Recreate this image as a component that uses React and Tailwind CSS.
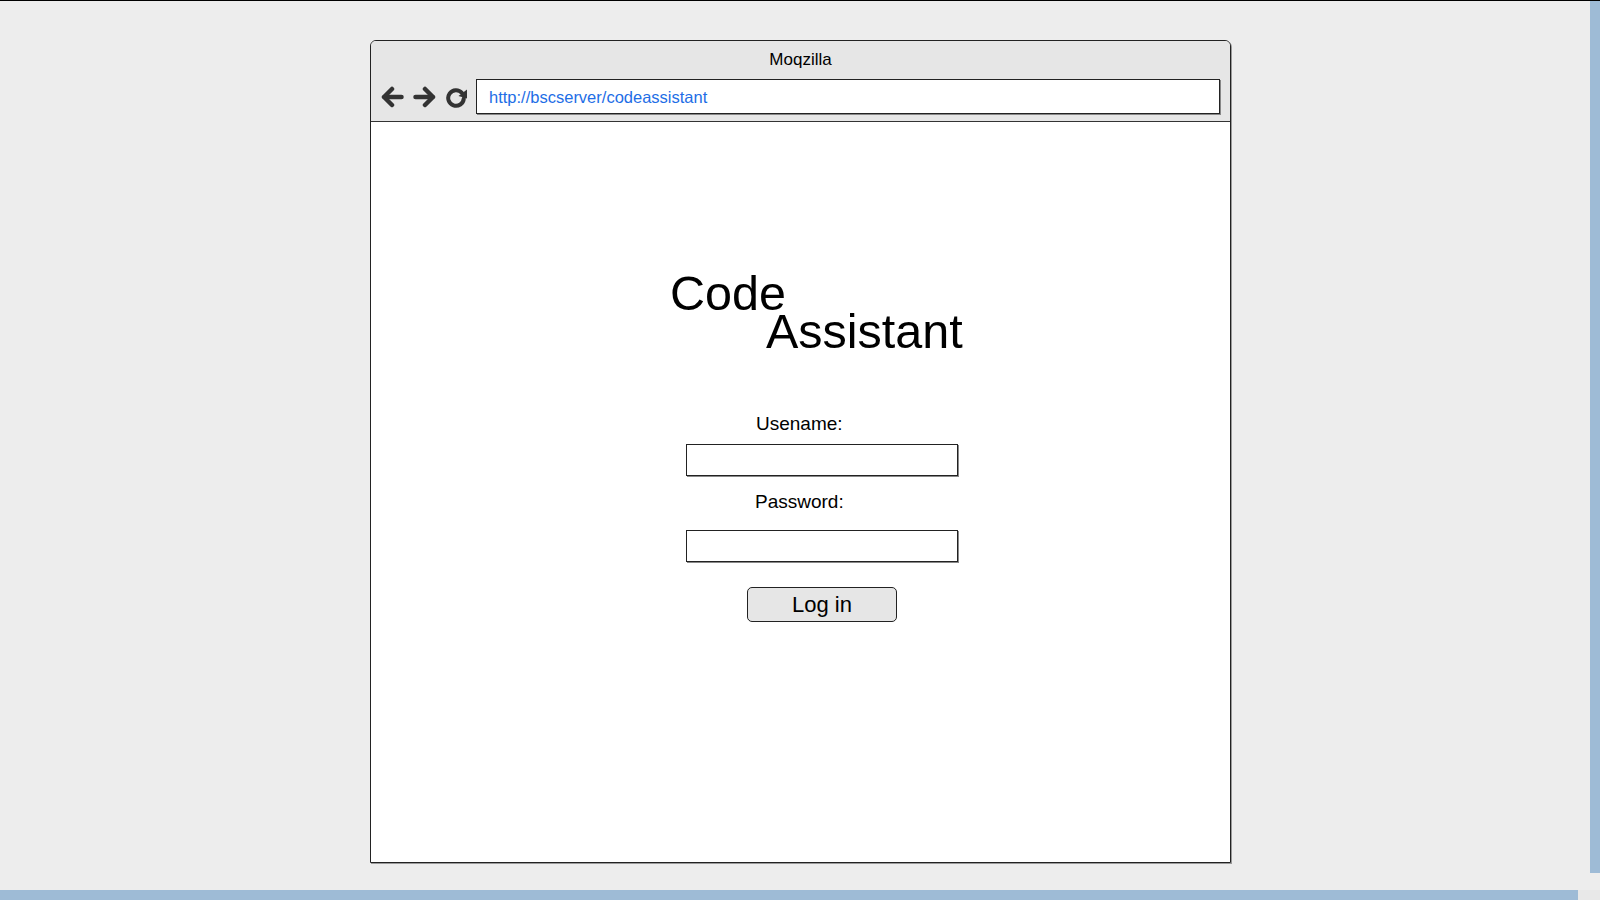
import React from 'react';

const font = { fontFamily: '"Liberation Sans", Arial, sans-serif' };

const BackIcon = () => (
  <svg width="23" height="22" viewBox="0 0 23 22" fill="none" stroke="#333" strokeWidth="4.5" strokeLinecap="round" strokeLinejoin="round">
    <path d="M20.5 11H3.5" />
    <path d="M11 3L3 11L11 19" />
  </svg>
);

const ForwardIcon = () => (
  <svg width="23" height="22" viewBox="0 0 23 22" fill="none" stroke="#333" strokeWidth="4.5" strokeLinecap="round" strokeLinejoin="round">
    <path d="M2.5 11H19.5" />
    <path d="M12 3L20 11L12 19" />
  </svg>
);

const RefreshIcon = () => (
  <svg width="23" height="22" viewBox="0 0 23 22" fill="none">
    <path d="M17 7A7.8 7.8 0 1 0 18.8 12.5" stroke="#333" strokeWidth="4" strokeLinecap="round" />
    <path d="M22 3.5L22 12.5L13.5 10Z" fill="#333" />
  </svg>
);

const App = () => {
  return (
    <div className="w-[1600px] h-[900px] flex flex-col bg-[#ededed] overflow-hidden" style={font}>
      <div className="h-px bg-black shrink-0" />
      <div className="flex flex-1 min-h-0">
        <div className="flex-1 pt-[39px] pl-[370px]">
          {/* browser window */}
          <div className="w-[861px] h-[823px] flex flex-col border border-[#222] rounded-t-[6px] shadow-[1px_1px_0_#9a9a9a] overflow-hidden">
            <div className="h-[81px] shrink-0 bg-[#e6e6e6] border-b border-[#333] flex flex-col">
              <div className="h-[37px] flex items-center justify-center text-[17px] text-black">Moqzilla</div>
              <div className="flex items-center mt-px pl-[10px] pr-[10px]">
                <div className="flex items-center gap-[9px] mr-[8px]">
                  <BackIcon />
                  <ForwardIcon />
                  <RefreshIcon />
                </div>
                <div className="flex-1 h-[35px] bg-white border border-[#222] shadow-[1px_1px_0_#888] flex items-center pl-[12px] pt-[2px] text-[16.5px] text-[#1e6ee6]">
                  http://bscserver/codeassistant
                </div>
              </div>
            </div>

            {/* page body */}
            <div className="flex-1 bg-white flex flex-col items-start">
              <div className="mt-[152px] ml-[299px] text-[48.5px] leading-[38px] text-black flex flex-col">
                <span>Code</span>
                <span className="ml-[96px]">Assistant</span>
              </div>

              <label className="mt-[63px] ml-[385px] text-[19px] leading-[22px] text-black">Usename:</label>
              <div className="mt-[9px] ml-[315px] w-[272px] h-[32px] bg-white border border-[#222] shadow-[1px_1px_0_#888]" />

              <label className="mt-[15px] ml-[384px] text-[19px] leading-[22px] text-black">Password:</label>
              <div className="mt-[17px] ml-[315px] w-[272px] h-[32px] bg-white border border-[#222] shadow-[1px_1px_0_#888]" />

              <button className="mt-[25px] ml-[376px] w-[150px] h-[35px] rounded-[5px] bg-[#e6e6e6] border border-[#222] flex items-center justify-center text-[22px] text-black">
                Log in
              </button>
            </div>
          </div>
        </div>
        <div className="w-[10px] bg-[#9ebbd6] mb-[17px]" />
      </div>
      <div className="h-[10px] flex shrink-0">
        <div className="w-[1578px] bg-[#9ebbd6]" />
        <div className="flex-1 bg-[#e8e8e8]" />
      </div>
    </div>
  );
};

export default App;
